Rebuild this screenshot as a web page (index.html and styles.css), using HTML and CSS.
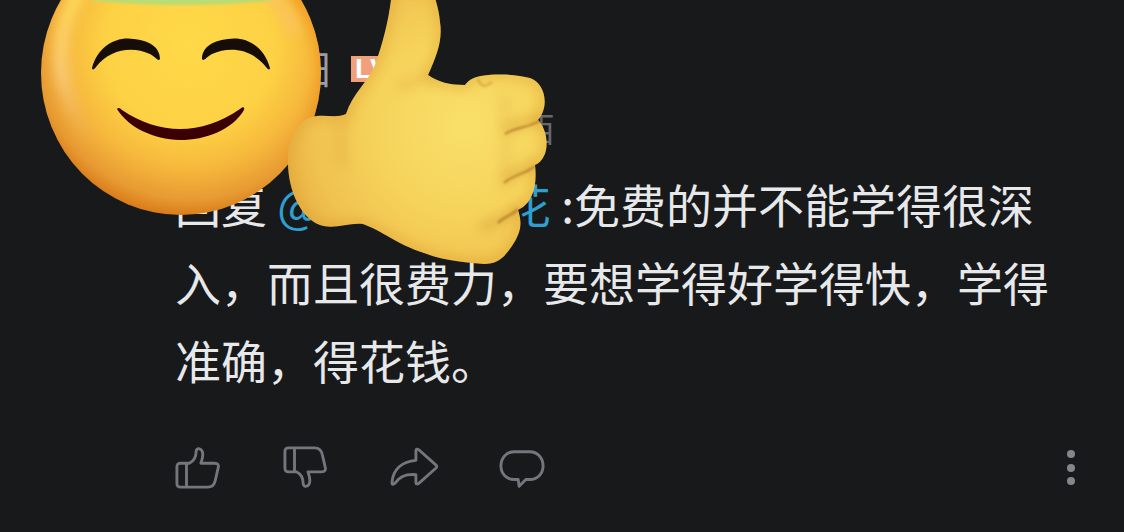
FILE: index.html
```
<!DOCTYPE html>
<html lang="zh-CN">
<head>
  <meta charset="UTF-8">
  <meta name="viewport" content="width=device-width, initial-scale=1">
  <title>评论</title>
  <link rel="stylesheet" href="styles.css">
</head>
<body>

  <article class="comment">
    <header class="user">
      <span class="name">小小小阳</span>
      <span class="level">LV5</span>
    </header>
    <p class="meta">11月10日 12:30 来自江西</p>
    <p class="text">回复 <a href="#">@一朵小小花</a> :免费的并不能学得很深入，而且很费力，要想学得好学得快，学得准确，得花钱。</p>

    <div class="actions">
      <button aria-label="赞">
        <svg width="46" height="46" viewBox="0 0 48 48">
          <path d="M6 19h9c6-3 7-7 7-12 0-5 7-4 7 3 0 4-1 6-2 9h14c4 0 5 2 4 5l-3 13c-1 5-4 7-8 7H6c-3 0-4-1-4-4V23c0-3 1-4 4-4zM12 19v25"/>
        </svg>
      </button>
      <button aria-label="踩">
        <svg width="46" height="46" viewBox="0 0 48 48">
          <path d="M6 28h8c6 3 7 7 7 12 0 5 7 4 7-3 0-4-1-6-2-9h14c4 0 5-2 4-5l-3-13c-1-5-4-7-8-7H6C3 3 2 4 2 7v17c0 3 1 4 4 4zM12 3v25"/>
        </svg>
      </button>
      <button aria-label="转发">
        <svg width="46" height="46" viewBox="0 0 48 48">
          <path d="M26 6c0-2 1-2 3-1l18 16c1 1 1 2 0 3L29 40c-1 1-3 1-3-1v-8c-11-1-17 2-22 9-2 2-3 1-3-1 1-13 10-22 25-23z"/>
        </svg>
      </button>
      <button aria-label="评论">
        <svg width="46" height="46" viewBox="0 0 48 48">
          <path d="M16 7h16c8 0 14 6 14 15 0 8-6 14-14 14h-4l-7 7-1-7h-4C8 36 2 30 2 22 2 13 8 7 16 7z"/>
        </svg>
      </button>
      <button class="more" aria-label="更多">
        <svg width="10" height="46" viewBox="0 0 10 46">
          <circle cx="5" cy="9" r="4"/>
          <circle cx="5" cy="23" r="4"/>
          <circle cx="5" cy="36" r="4"/>
        </svg>
      </button>
    </div>
  </article>

  <!-- stickers over the names -->
  <svg class="stickers" width="560" height="280" viewBox="0 0 560 280" aria-hidden="true">
    <defs>
      <radialGradient id="face" gradientUnits="userSpaceOnUse" cx="190" cy="45" r="172">
        <stop offset="0" stop-color="#fed948"/>
        <stop offset=".5" stop-color="#fdd144"/>
        <stop offset=".72" stop-color="#f6b83c"/>
        <stop offset=".9" stop-color="#e79a32"/>
        <stop offset="1" stop-color="#d87918"/>
      </radialGradient>
      <linearGradient id="shine" gradientUnits="userSpaceOnUse" x1="0" y1="0" x2="0" y2="150">
        <stop offset="0" stop-color="#ffd95c"/>
        <stop offset=".5" stop-color="#f9cb78"/>
        <stop offset="1" stop-color="#efac5c" stop-opacity="0"/>
      </linearGradient>
      <radialGradient id="hand" gradientUnits="userSpaceOnUse" cx="465" cy="125" r="190">
        <stop offset="0" stop-color="#f9df69"/>
        <stop offset=".45" stop-color="#f6d45c"/>
        <stop offset=".8" stop-color="#f0c24f"/>
        <stop offset="1" stop-color="#e9b245"/>
      </radialGradient>
      <filter id="soft" filterUnits="userSpaceOnUse" x="-40" y="-60" width="640" height="380"><feGaussianBlur stdDeviation="6"/></filter>
      <filter id="crease" filterUnits="userSpaceOnUse" x="-40" y="-60" width="640" height="380"><feGaussianBlur stdDeviation="1"/></filter>
      <clipPath id="faceClip"><ellipse cx="181" cy="73" rx="140" ry="142"/></clipPath>
      <clipPath id="handClip">
        <path id="handShape" d="M392-10C390 15 384 40 375 65c-8 18-22 28-29 49-8 4-18 1-29 2-19 2-29 21-29 46 0 29 13 56 32 63 14 5 29-3 43-1 20 7 33 20 61 29 20 8 46 10 60 11 15 0 21-8 28-18 8-12 11-21 6-36 11-5 20-18 17-45 16-7 14-34 3-45 12-14 7-37-8-42-18-5-50-5-60 2-2 2-4 3-5 5-15 0-27-3-37-10 8-18 15-34 12-53-1-12-4-20-7-32z"/>
      </clipPath>
    </defs>

    <ellipse cx="181" cy="73" rx="140" ry="142" fill="url(#face)"/>
    <g clip-path="url(#faceClip)">
      <path d="M80-10C52 35 54 90 90 140" fill="none" stroke="url(#shine)" stroke-width="14" filter="url(#soft)"/>
      <path d="M293-10c45 55 42 115 0 170" fill="none" stroke="#f0941f" stroke-width="14" opacity=".7" filter="url(#soft)"/>
      <path d="M262-10q30 20 32 44" fill="none" stroke="#fbc36a" stroke-width="12" opacity=".7" filter="url(#soft)"/>
      <path d="M80-10h212L268 1q-84 8-174 0z" fill="#b9dc74" filter="url(#crease)"/>
    </g>
    <path d="M92 68c6-22 24-32 42-29 18 2 26 10 26 20-2 3-4-2-10-5-18-8-40-5-54 13-2 3-4 3-4 1z" fill="#160d08"/>
    <path d="M270 68c-6-22-24-32-42-29-18 2-26 10-26 20 2 3 4-2 10-5 18-8 40-5 54 13 2 3 4 3 4 1z" fill="#160d08"/>
    <path d="M117 109c1-2 3-1 5 1 37 25 79 26 118-1 3-3 5-2 4 1-12 20-38 30-64 30-27-1-51-12-63-31z" fill="#3b0004"/>

    <use href="#handShape" fill="url(#hand)"/>
    <g clip-path="url(#handClip)">
      <use href="#handShape" fill="none" stroke="#d8952c" stroke-width="6" opacity=".6" filter="url(#soft)"/>
      <path d="M345 112c-6 20-6 40-2 54" fill="none" stroke="#e0a43c" stroke-width="10" opacity=".4" filter="url(#soft)"/>
      <path d="M398 88q20-12 40-10" fill="none" stroke="#e3ac40" stroke-width="8" opacity=".5" filter="url(#soft)"/>
      <g fill="none" stroke="#cf922f" stroke-width="8" opacity=".5" filter="url(#soft)">
        <path d="M505 130c10-7 24-6 38-14"/>
        <path d="M504 180c10-9 22-9 31-17"/>
        <path d="M480 228c15-6 25-8 38-20"/>
      </g>
      <g fill="none" stroke="#b0752a" stroke-width="2" opacity=".85" filter="url(#crease)">
        <path d="M505 134c10-7 24-6 36-14"/>
        <path d="M504 183c10-9 22-9 31-17"/>
        <path d="M498 223c5-6 15-8 20-14"/>
        <path d="M478 79q2 6 6 7q5-1 8-4" opacity=".5"/>
      </g>
      <path d="M503 95c4 12 2 30 2 45 3 20 2 35-2 48" fill="none" stroke="#dca23a" stroke-width="5" opacity=".4" filter="url(#soft)"/>
    </g>
  </svg>

</body>
</html>
```
FILE: styles.css
```
html {
  box-sizing: border-box;
  background: #18191b;
}

*, *:before, *:after {
  box-sizing: inherit;
}

body {
  margin: 0;
  position: relative;
  font-family: "Noto Sans CJK SC", sans-serif;
  color: #e7e8ea;
}

.comment {
  padding: 40px 48px 36px 175px;
}

.user {
  display: flex;
  align-items: center;
  gap: 20px;
  height: 54px;
}

.name {
  font-size: 39px;
  line-height: 54px;
  color: #9b9ca4;
}

.level {
  padding: 0 4px;
  margin-top: 4px;
  background: #f0a17c;
  color: #fff;
  font: bold 28px/26px "Liberation Sans", sans-serif;
}

.meta {
  margin: 12px 0 14px;
  font-size: 34px;
  line-height: 44px;
  color: #66686e;
}

.text {
  margin: 0;
  font-size: 46px;
  line-height: 78px;
}

.text a {
  color: #2e9fcf;
  text-decoration: none;
}

.actions {
  display: flex;
  gap: 62px;
  margin-top: 47px;
}

button {
  display: block;
  padding: 0;
  border: 0;
  background: none;
  cursor: pointer;
}

button svg {
  display: block;
  overflow: visible;
  fill: none;
  stroke: #74767c;
  stroke-width: 3;
  stroke-linejoin: round;
}

.more {
  margin-left: auto;
}

.more svg {
  fill: #85868b;
  stroke: none;
}

.stickers {
  position: absolute;
  top: 0;
  left: 0;
  pointer-events: none;
}
```
